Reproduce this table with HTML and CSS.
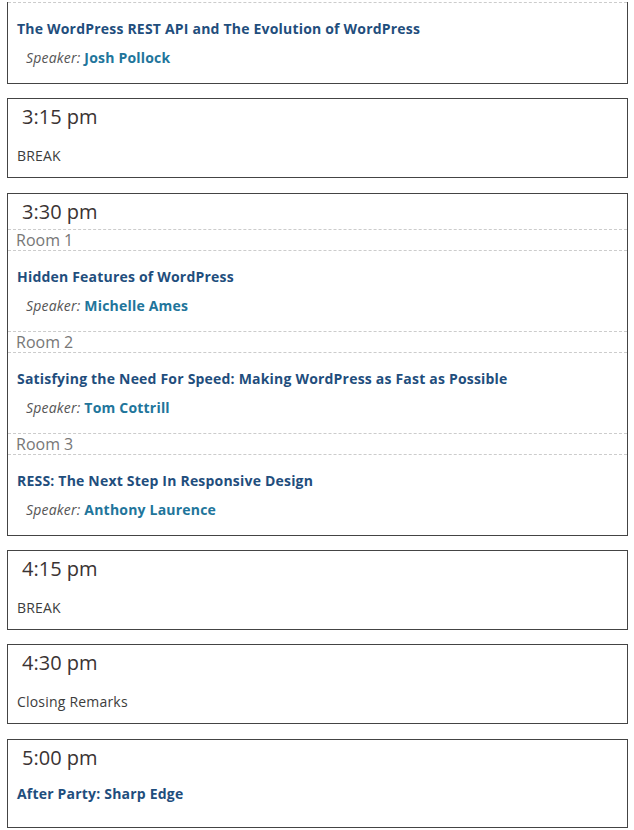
FILE: index.html
```html
<!DOCTYPE html>
<html lang="en">
<head>
<meta charset="utf-8">
<title>Schedule</title>
<link rel="stylesheet" href="styles.css">
</head>
<body>
<div class="schedule">
  <div class="slot slot-cut">
    <div class="session session-room">
      <div class="title">The WordPress REST API and The Evolution of WordPress</div>
      <div class="speaker"><span class="label">Speaker:</span> <span class="name">Josh Pollock</span></div>
    </div>
  </div>

  <div class="slot">
    <div class="time">3:15 pm</div>
    <div class="note">BREAK</div>
  </div>

  <div class="slot">
    <div class="time">3:30 pm</div>
    <div class="room">Room 1</div>
    <div class="session session-room">
      <div class="title">Hidden Features of WordPress</div>
      <div class="speaker"><span class="label">Speaker:</span> <span class="name">Michelle Ames</span></div>
    </div>
    <div class="room">Room 2</div>
    <div class="session session-room">
      <div class="title">Satisfying the Need For Speed: Making WordPress as Fast as Possible</div>
      <div class="speaker"><span class="label">Speaker:</span> <span class="name">Tom Cottrill</span></div>
    </div>
    <div class="room">Room 3</div>
    <div class="session session-room">
      <div class="title">RESS: The Next Step In Responsive Design</div>
      <div class="speaker"><span class="label">Speaker:</span> <span class="name">Anthony Laurence</span></div>
    </div>
  </div>

  <div class="slot">
    <div class="time">4:15 pm</div>
    <div class="note">BREAK</div>
  </div>

  <div class="slot">
    <div class="time">4:30 pm</div>
    <div class="note">Closing Remarks</div>
  </div>

  <div class="slot">
    <div class="time">5:00 pm</div>
    <div class="session session-plain">
      <div class="title">After Party: Sharp Edge</div>
    </div>
  </div>
</div>
</body>
</html>
```
FILE: styles.css
```css
html, body {
  margin: 0;
  padding: 0;
  background: #fff;
}

body {
  font-family: "Open Sans", "Liberation Sans", sans-serif;
  color: #333;
}

.schedule {
  padding: 2px 6px 0 7px;
  display: flex;
  flex-direction: column;
  gap: 14.35px;
}

.slot {
  border: 1px solid #444;
}

.slot-cut {
  border-top: none;
}

.time {
  font-size: 20px;
  line-height: 27px;
  padding: 4px 14px 4px 14px;
  color: #3a3333;
}

.note {
  font-size: 14px;
  line-height: 20px;
  letter-spacing: 0.2px;
  padding: 12px 9px 11px;
  color: #3c3c3c;
}

.room {
  border-top: 1px dashed #ccc;
  font-size: 16px;
  line-height: 20px;
  padding: 0 8px;
  color: #777;
}

.session {
  padding: 0 9px;
}

.session-room {
  border-top: 1px dashed #ccc;
  padding-top: 16px;
  padding-bottom: 15px;
}

.session-plain {
  padding-top: 9px;
  padding-bottom: 14px;
}

.title {
  font-size: 14px;
  line-height: 20px;
  font-weight: 700;
  letter-spacing: 0.2px;
  color: #1f4e7d;
}

.session-plain .title {
  margin-bottom: 9px;
}

.speaker {
  margin-top: 9px;
  padding-left: 9px;
  font-size: 14px;
  line-height: 20px;
  letter-spacing: 0.2px;
}

.speaker .label {
  font-style: italic;
  color: #555;
}

.speaker .name {
  font-weight: 700;
  color: #21759b;
}
```
